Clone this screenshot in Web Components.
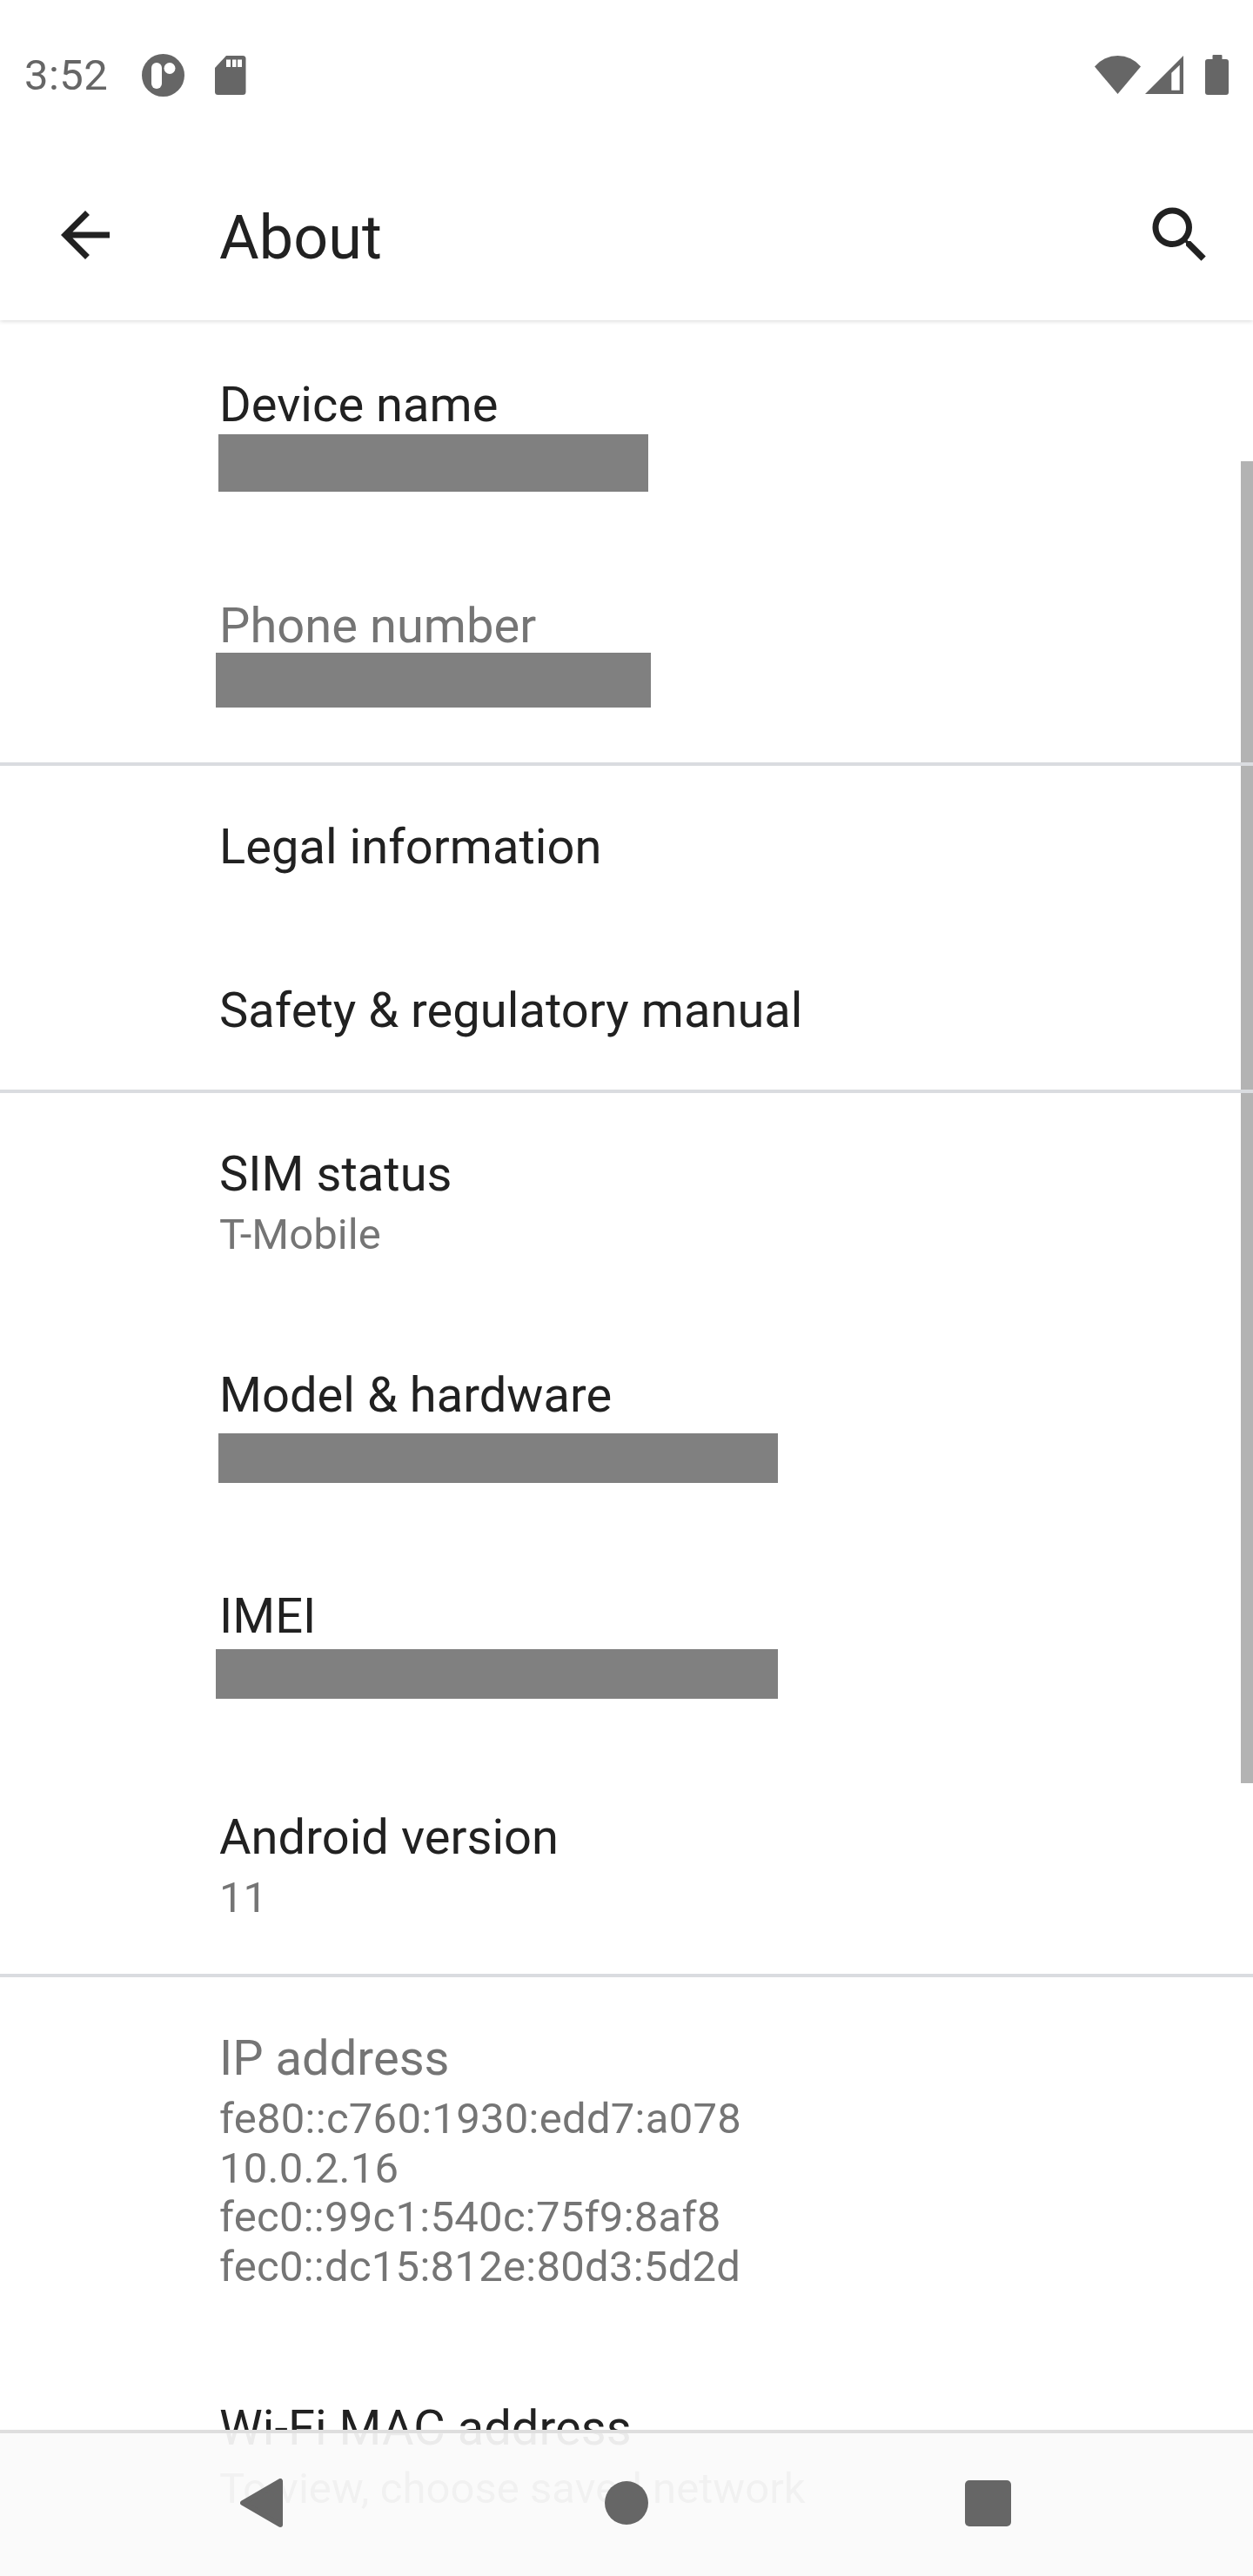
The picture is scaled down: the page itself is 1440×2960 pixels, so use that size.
<!DOCTYPE html>
<html lang="en">
<head>
<meta charset="utf-8">
<title>About</title>
<style>
  body { margin: 0; background: #fff; font-family: Roboto, "Liberation Sans", sans-serif; }
</style>
</head>
<body>
<settings-screen>
  <status-bar time="3:52"></status-bar>
  <app-toolbar heading="About"></app-toolbar>
  <about-list>
    <about-row redact>Device name<redact-bar slot="summary" style="--x:-1px;--y:1px;--w:494px;--h:66px"></redact-bar></about-row>
    <about-row redact disabled>Phone number<redact-bar slot="summary" style="--x:-4px;--y:-2px;--w:500px;--h:63px"></redact-bar></about-row>
    <about-divider></about-divider>
    <about-row>Legal information</about-row>
    <about-row>Safety &amp; regulatory manual</about-row>
    <about-divider></about-divider>
    <about-row>SIM status<span slot="summary">T-Mobile</span></about-row>
    <about-row redact>Model &amp; hardware<redact-bar slot="summary" style="--x:-1px;--y:11px;--w:643px;--h:57px"></redact-bar></about-row>
    <about-row redact>IMEI<redact-bar slot="summary" style="--x:-4px;--y:5px;--w:646px;--h:57px"></redact-bar></about-row>
    <about-row>Android version<span slot="summary">11</span></about-row>
    <about-divider></about-divider>
    <about-row disabled style="padding-bottom:63px">IP address<span slot="summary" style="letter-spacing:0.27px">fe80::c760:1930:edd7:a078<br>10.0.2.16<br>fec0::99c1:540c:75f9:8af8<br>fec0::dc15:812e:80d3:5d2d</span></about-row>
    <about-row>Wi-Fi MAC address<span slot="summary">To view, choose saved network</span></about-row>
  </about-list>
  <nav-bar></nav-bar>
</settings-screen>

<script>
class SettingsScreen extends HTMLElement {
  constructor() {
    super();
    this.shadowDOM = this.attachShadow({ mode: 'open' });
    this.shadowDOM.innerHTML = `
      <style>
        :host {
          display: flex;
          flex-direction: column;
          position: relative;
          width: 1440px;
          height: 2960px;
          overflow: hidden;
          background: #fff;
        }
      </style>
      <slot></slot>
    `;
  }
}

class StatusBar extends HTMLElement {
  constructor() {
    super();
    this.shadowDOM = this.attachShadow({ mode: 'open' });
  }

  connectedCallback() {
    this.shadowDOM.innerHTML = `
      <style>
        :host {
          display: flex;
          align-items: center;
          flex: none;
          position: relative;
          z-index: 3;
          height: 172px;
          padding: 0 28px;
          box-sizing: border-box;
          background: #fff;
          color: #666;
          font-size: 49px;
          letter-spacing: 0.4px;
        }
        svg { display: block; fill: #666; flex: none; }
        .time { width: 135px; }
        .sd { margin-left: 35px; }
        .wifi { margin-left: auto; }
        .signal { margin-left: 5px; }
        .battery { margin-left: 25px; }
      </style>
      <span class="time">${this.getAttribute('time')}</span>
      <svg width="49" height="49" viewBox="0 0 49 49">
        <circle cx="24.5" cy="24.5" r="24.5"/>
        <rect x="11" y="10" width="12" height="30" rx="6" fill="#fff"/>
        <circle cx="32" cy="16.5" r="6.5" fill="#fff"/>
      </svg>
      <svg class="sd" width="36" height="45" viewBox="0 0 36 45">
        <path d="M13 0H32a3.5 3.5 0 0 1 3.5 3.5V41.5a3.5 3.5 0 0 1-3.5 3.5H3.5A3.5 3.5 0 0 1 0 41.5V14Z"/>
        <path fill="#fff" d="M13 4.5h5V13h-5zM20 4.5h4.5V13H20zM26 4.5h5V13h-5z"/>
      </svg>
      <svg class="wifi" width="53" height="44" viewBox="0 0 53 44">
        <path d="M0 12.6A34.3 34.3 0 0 1 53 12.6L26.5 44Z"/>
      </svg>
      <svg class="signal" width="44" height="44" viewBox="0 0 44 44">
        <path fill-rule="evenodd" d="M44 0V44H0ZM39.7 10.7 30.3 19.7V39.7H39.7Z"/>
      </svg>
      <svg class="battery" width="27" height="46" viewBox="0 0 27 46">
        <rect x="8.5" width="11" height="8" rx="1"/>
        <rect y="5" width="27" height="41" rx="3"/>
      </svg>
    `;
  }
}

class AppToolbar extends HTMLElement {
  constructor() {
    super();
    this.shadowDOM = this.attachShadow({ mode: 'open' });
  }

  connectedCallback() {
    this.shadowDOM.innerHTML = `
      <style>
        :host {
          display: flex;
          align-items: center;
          flex: none;
          position: relative;
          z-index: 2;
          height: 196px;
          padding: 0 42px 0 56px;
          box-sizing: border-box;
          background: #fff;
          color: #212121;
          box-shadow: 0 1px 5px rgba(0, 0, 0, 0.16);
        }
        svg { display: block; fill: #212121; flex: none; }
        h1 {
          flex: 1;
          margin: 0 0 0 112px;
          padding-top: 6px;
          font-size: 70px;
          font-weight: 400;
          letter-spacing: 0.1px;
        }
      </style>
      <svg width="84" height="84" viewBox="0 0 24 24">
        <path d="M20 11H7.83l5.59-5.59L12 4l-8 8 8 8 1.41-1.41L7.83 13H20v-2z"/>
      </svg>
      <h1>${this.getAttribute('heading')}</h1>
      <svg width="84" height="84" viewBox="0 0 24 24">
        <path d="M15.5 14h-.79l-.28-.27C15.41 12.59 16 11.11 16 9.5 16 5.91 13.09 3 9.5 3S3 5.91 3 9.5 5.91 16 9.5 16c1.61 0 3.09-.59 4.23-1.57l.27.28v.79l5 4.99L20.49 19l-4.99-5zm-6 0C7.01 14 5 11.99 5 9.5S7.01 5 9.5 5 14 7.01 14 9.5 11.99 14 9.5 14z"/>
      </svg>
    `;
  }
}

class AboutList extends HTMLElement {
  constructor() {
    super();
    this.shadowDOM = this.attachShadow({ mode: 'open' });
    this.shadowDOM.innerHTML = `
      <style>
        :host {
          display: block;
          flex: 1;
          min-height: 0;
          position: relative;
          padding-top: 4px;
        }
        .scrollbar {
          position: absolute;
          top: 162px;
          right: 0;
          width: 14px;
          height: 1519px;
          background: #b3b3b3;
        }
      </style>
      <div class="scrollbar"></div>
      <slot></slot>
    `;
  }
}

class AboutRow extends HTMLElement {
  constructor() {
    super();
    this.shadowDOM = this.attachShadow({ mode: 'open' });
    this.shadowDOM.innerHTML = `
      <style>
        :host {
          display: block;
          position: relative;
          padding: 60px 0 62px 252px;
          color: #212121;
        }
        :host([redact]) {
          height: 254px;
          padding-bottom: 0;
          box-sizing: border-box;
        }
        :host([disabled]) .title { color: #757575; }
        .title {
          font-size: 56px;
          line-height: 66px;
          letter-spacing: 0.05px;
        }
        .summary {
          color: #757575;
          font-size: 49px;
          line-height: 56.67px;
          letter-spacing: 0.05px;
        }
        .summary.filled { margin: 9px 0 0.33px; }
        :host([redact]) .summary.filled { margin: 0; }
      </style>
      <div class="title"><slot></slot></div>
      <div class="summary"><slot name="summary"></slot></div>
    `;
  }

  connectedCallback() {
    this.shadowDOM.querySelector('.summary').classList.toggle('filled', !!this.querySelector('[slot=summary]'));
  }
}

class RedactBar extends HTMLElement {
  constructor() {
    super();
    this.shadowDOM = this.attachShadow({ mode: 'open' });
    this.shadowDOM.innerHTML = `
      <style>
        :host {
          display: block;
          margin-left: var(--x);
          margin-top: var(--y);
          width: var(--w);
          height: var(--h);
          background: #808080;
        }
      </style>
    `;
  }
}

class AboutDivider extends HTMLElement {
  constructor() {
    super();
    this.shadowDOM = this.attachShadow({ mode: 'open' });
    this.shadowDOM.innerHTML = `
      <style>
        :host {
          display: block;
          position: relative;
          z-index: 1;
          height: 4px;
          margin-top: -4px;
          background: #dadce0;
        }
      </style>
    `;
  }
}

class NavBar extends HTMLElement {
  constructor() {
    super();
    this.shadowDOM = this.attachShadow({ mode: 'open' });
    this.shadowDOM.innerHTML = `
      <style>
        :host {
          display: flex;
          align-items: center;
          position: absolute;
          left: 0;
          right: 0;
          bottom: 0;
          z-index: 3;
          height: 168px;
          padding: 0 0 4px 276px;
          box-sizing: border-box;
          border-top: 4px solid #dedede;
          background: rgba(250, 250, 250, 0.935);
        }
        svg { display: block; fill: #666; flex: none; }
        .home { margin-left: 370px; }
        .recents { margin-left: 364px; }
      </style>
      <svg width="49" height="56" viewBox="0 0 49 56">
        <path d="M46 3V53L3 28Z" stroke="#666" stroke-width="6" stroke-linejoin="round"/>
      </svg>
      <svg class="home" width="50" height="50" viewBox="0 0 50 50">
        <circle cx="25" cy="25" r="25"/>
      </svg>
      <svg class="recents" width="53" height="53" viewBox="0 0 53 53">
        <rect width="53" height="53" rx="5"/>
      </svg>
    `;
  }
}

customElements.define('settings-screen', SettingsScreen);
customElements.define('status-bar', StatusBar);
customElements.define('app-toolbar', AppToolbar);
customElements.define('about-list', AboutList);
customElements.define('about-row', AboutRow);
customElements.define('redact-bar', RedactBar);
customElements.define('about-divider', AboutDivider);
customElements.define('nav-bar', NavBar);
</script>
</body>
</html>
